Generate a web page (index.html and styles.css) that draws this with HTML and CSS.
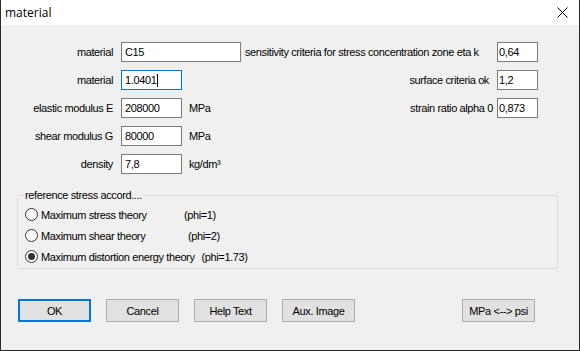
FILE: index.html
```html
<!DOCTYPE html>
<html>
<head>
<meta charset="utf-8">
<link rel="stylesheet" href="styles.css">
</head>
<body>
<div class="window">
  <div class="titlebar">
    <span class="title">material</span>
    <svg class="close" width="12" height="12" viewBox="0 0 12 12"><path d="M0.5 0.5 L10.5 10.5 M10.5 0.5 L0.5 10.5" stroke="#000" stroke-width="1" fill="none"/></svg>
  </div>
  <div class="body">
    <div class="form">
      <div class="lbl">material</div>
      <div class="cell"><div class="input wide">C15</div></div>
      <div class="rlbl left">sensitivity criteria for stress concentration zone eta k</div>
      <div class="cell"><div class="input small">0,64</div></div>

      <div class="lbl">material</div>
      <div class="cell"><div class="input focus">1.0401<span class="caret"></span></div></div>
      <div class="rlbl pr8">surface criteria ok</div>
      <div class="cell"><div class="input small">1,2</div></div>

      <div class="lbl">elastic modulus E</div>
      <div class="cell"><div class="input">208000</div><span class="unit">MPa</span></div>
      <div class="rlbl pr4">strain ratio alpha 0</div>
      <div class="cell"><div class="input small">0,873</div></div>

      <div class="lbl">shear modulus G</div>
      <div class="cell"><div class="input">80000</div><span class="unit">MPa</span></div>
      <div class="rlbl"></div>
      <div class="cell"></div>

      <div class="lbl">density</div>
      <div class="cell"><div class="input">7,8</div><span class="unit">kg/dm³</span></div>
      <div class="rlbl"></div>
      <div class="cell"></div>
    </div>

    <fieldset class="group">
      <legend>reference stress accord....</legend>
      <div class="radio-row"><span class="radio"></span><span class="name n1">Maximum stress theory</span><span>(phi=1)</span></div>
      <div class="radio-row"><span class="radio"></span><span class="name n2">Maximum shear theory</span><span>(phi=2)</span></div>
      <div class="radio-row"><span class="radio checked"></span><span class="name n3">Maximum distortion energy theory</span><span>(phi=1.73)</span></div>
    </fieldset>

    <div class="buttons">
      <div class="btn default">OK</div>
      <div class="btn">Cancel</div>
      <div class="btn">Help Text</div>
      <div class="btn">Aux. Image</div>
      <div class="btn push">MPa &lt;--&gt; psi</div>
    </div>
  </div>
</div>
</body>
</html>
```

FILE: styles.css
```css
* { box-sizing: border-box; }
html, body { margin: 0; padding: 0; }
body {
  width: 580px;
  height: 351px;
  overflow: hidden;
  background: #f0f0f0;
}
.window {
  width: 580px;
  height: 351px;
  border: 1px solid #2b2b2b;
  border-top: none;
  background: #f0f0f0;
  font-family: "Liberation Sans", Arial, sans-serif;
  font-size: 11px;
  letter-spacing: -0.38px;
  color: #000;
  display: flex;
  flex-direction: column;
}
.titlebar {
  height: 25px;
  background: #fff;
  display: flex;
  align-items: center;
  padding: 0 0 1px 4px;
  letter-spacing: 0;
}
.title {
  font-family: "Open Sans", "Noto Sans", sans-serif;
  font-size: 12px;
  flex: 1;
}
.close {
  margin-right: 10px;
  margin-top: 1px;
}
.body {
  flex: 1;
  display: flex;
  flex-direction: column;
}
.form {
  margin-top: 17px;
  display: grid;
  grid-template-columns: 120px 120px 256px 41px;
  grid-auto-rows: 20px;
  row-gap: 8px;
}
.lbl {
  text-align: right;
  padding-right: 8px;
  line-height: 20px;
  white-space: nowrap;
}
.rlbl {
  text-align: right;
  line-height: 20px;
  white-space: nowrap;
}
.rlbl.left { text-align: left; padding-left: 4px; }
.rlbl.pr8 { padding-right: 8px; }
.rlbl.pr4 { padding-right: 4px; }
.cell {
  display: flex;
  align-items: center;
}
.input {
  width: 61px;
  height: 20px;
  border: 1px solid #7a7a7a;
  background: #fff;
  line-height: 18px;
  padding-left: 3px;
  font-size: 11px;
  white-space: nowrap;
  display: flex;
  align-items: center;
}
.input.wide { width: 120px; }
.input.small { width: 41px; padding-left: 1px; }
.input.focus { border-color: #0078d7; }
.caret {
  display: inline-block;
  width: 1px;
  height: 13px;
  background: #000;
  margin-left: 1px;
}
.unit {
  margin-left: 7px;
}
.group {
  margin: 15px 21px 0 16px;
  padding: 2px 7px 1px 7px;
  border: 1px solid #dcdcdc;
  min-width: 0;
}
.group legend {
  padding: 0 1px 0 0;
  margin-left: 0;
  line-height: 13px;
}
.radio-row {
  height: 21px;
  display: flex;
  align-items: center;
}
.radio {
  width: 13px;
  height: 13px;
  border: 1px solid #333;
  border-radius: 50%;
  background: #fff;
  margin-right: 3px;
  display: flex;
  align-items: center;
  justify-content: center;
  flex: none;
}
.radio.checked::after {
  content: "";
  width: 7px;
  height: 7px;
  border-radius: 50%;
  background: #333;
}
.name.n1 { width: 143px; }
.name.n2 { width: 147px; }
.name.n3 { margin-right: 7px; }
.buttons {
  margin-top: 30px;
  padding-left: 17px;
  display: flex;
  gap: 15px;
}
.btn {
  width: 73px;
  height: 23px;
  border: 1px solid #adadad;
  background: #e1e1e1;
  display: flex;
  align-items: center;
  justify-content: center;
}
.btn.default { border: 2px solid #0078d7; }
.btn.push { margin-left: 92px; }
```
